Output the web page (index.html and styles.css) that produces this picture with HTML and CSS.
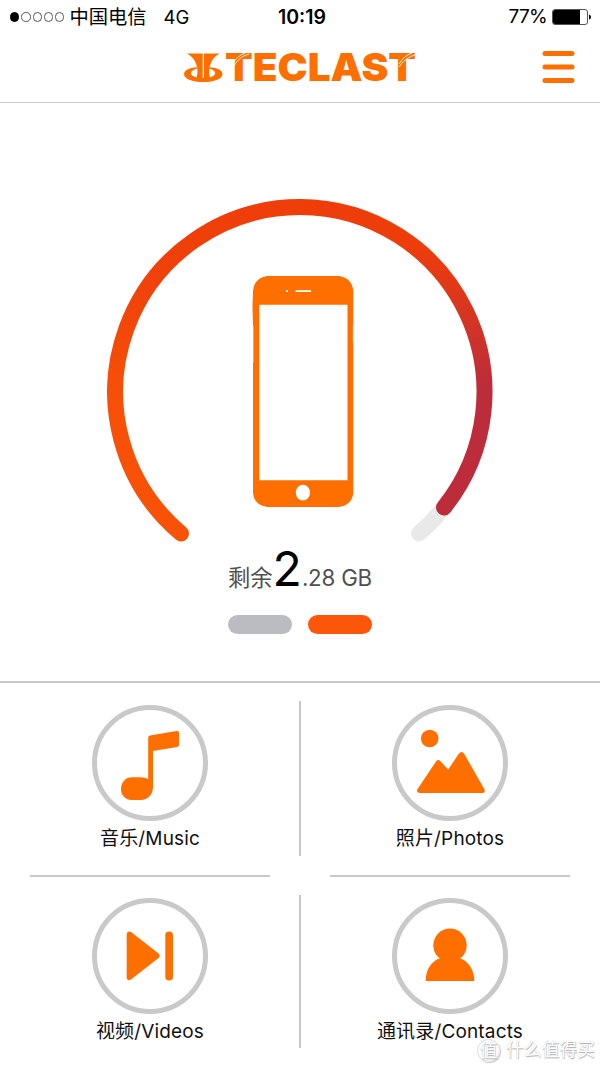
FILE: index.html
```html
<!DOCTYPE html>
<html lang="zh-CN">
<head>
<meta charset="utf-8">
<title>Teclast</title>
<link rel="stylesheet" href="styles.css">
</head>
<body>
<div class="app">
  <div class="status">
    <div class="carrier">
      <span class="dots"><i class="dot full"></i><i class="dot"></i><i class="dot"></i><i class="dot"></i><i class="dot"></i></span>
      <span class="operator">中国电信</span>
      <span class="network">4G</span>
    </div>
    <div class="clock">10:19</div>
    <div class="power">
      <span class="percent">77%</span>
      <svg width="39" height="16" viewBox="0 0 39 16">
        <rect x=".5" y=".5" width="35" height="15" rx="2.5" fill="#fff" stroke="#555"/>
        <path d="M3 1H28V15H3Q1 15 1 13V3Q1 1 3 1Z"/>
        <path d="M37 5.5Q39 6 39 8T37 10.500Z"/>
      </svg>
    </div>
  </div>

  <header class="header">
    <svg class="logo" width="234" height="34" viewBox="183 50 234 34">
      <g fill="#ff6f00">
        <path d="M187 53.500H202.700V78H196.500C199.500 68 195.500 58 187 53.500Z"/>
        <path d="M203.900 53.500H219.500C211 58 207.500 68 210 78H203.900Z"/>
        <path d="M197.300 67.200C188.500 67.800 184 70.500 184 74.200C184 78.700 192 82 203.300 82C214.500 82 222.500 78.700 222.500 74.200C222.500 70.500 218 67.800 209.200 67.200V68.500C213 69.500 215 71.200 215 73.200C215 75.500 212 77 209 77.500C206 78.300 200 78.300 197.500 77.500C194 77 191 75.500 191 73.200C191 71.200 193.500 69.500 197.300 68.500Z"/>
      </g>
      <text class="wordmark" x="225" y="81" textLength="191" lengthAdjust="spacingAndGlyphs">TECLAST</text>
      <g fill="none" stroke="#fff" stroke-width=".9">
        <path d="M233 63C236 58 240 55 245 53M234 66C237 60 242 56 249 54"/>
        <path d="M399 64C402 59 406 55 412 53M399 67C403 61 408 57 416 54.500"/>
      </g>
    </svg>
    <svg class="menu" width="34" height="34" viewBox="0 0 34 34" stroke="#ff6f00" stroke-width="5" stroke-linecap="round">
      <path d="M4 3.500H31M4 17H31M4 30.500H31"/>
    </svg>
  </header>

  <main class="storage">
    <svg class="gauge" width="386" height="346" viewBox="107 199 386 346">
      <defs>
        <linearGradient id="warm" gradientUnits="userSpaceOnUse" x1="0" y1="199" x2="0" y2="542">
          <stop offset="0" stop-color="#ee3d09"/><stop offset=".25" stop-color="#f0420a"/><stop offset=".56" stop-color="#f74f08"/><stop offset="1" stop-color="#f85208"/>
        </linearGradient>
        <linearGradient id="hot" gradientUnits="userSpaceOnUse" x1="0" y1="199" x2="0" y2="542">
          <stop offset="0" stop-color="#ee3d09"/><stop offset=".15" stop-color="#ec3d0c"/><stop offset=".55" stop-color="#bd2c3b"/><stop offset="1" stop-color="#bd2c3b"/>
        </linearGradient>
      </defs>
      <g fill="none" stroke-width="16" stroke-linecap="round">
        <path stroke="#e9e9e9" d="M444 507.500A185 185 0 0 1 419 533.500"/>
        <path stroke="url(#hot)" d="M300 207A185 185 0 0 1 444 507.500"/>
        <path stroke="url(#warm)" d="M181 533.500A185 185 0 0 1 300 207"/>
      </g>
      <path fill="#ff6f00" d="M267 276H339Q352 278 353.300 291V493Q352 505 339 507H267Q254 505 253 493V326L252.500 306L253 291Q254 278 267 276Z"/>
      <path fill="#fff" d="M259.300 304.700H347.500V480.300H259.300ZM295.500 290.300H311V292H295.500ZM286 290.300H288V292H286Z"/>
      <path stroke="#fff" stroke-width=".6" d="M253.100 326V363M353.300 325V343"/>
      <ellipse cx="302.900" cy="492.700" rx="7.100" ry="7.900" fill="#fff"/>
    </svg>
    <div class="remaining"><span class="cjk">剩余</span><span class="big">2</span><span class="rest">.28 GB</span></div>
    <div class="pager"><i class="pill"></i><i class="pill active"></i></div>
  </main>

  <nav class="grid">
    <a class="tile">
      <svg class="ring" viewBox="0 0 116 116"><circle class="rim" cx="58" cy="58" r="55.500"/>
        <path d="M56.200 32.500Q56.200 31 58 30.500L84.500 26Q87 25.600 87 28V40Q87 41.600 85 42L61 46V82C61 90 55 95 49 95H40C33 95 29 90 29 84C29 77 34 72.300 40 72.300H49Q53 72.300 56.200 74Z"/>
      </svg>
      <span class="label"><span>音乐</span>/Music</span>
    </a>
    <a class="tile">
      <svg class="ring" viewBox="0 0 116 116"><circle class="rim" cx="58" cy="58" r="55.500"/>
        <circle cx="37.700" cy="33.500" r="8.800"/>
        <path d="M25.300 84.500L44 56.500Q46 53.800 48.500 56.300L56.200 64.500L67 48.500Q69.500 45.500 72 48.500L92.500 84.500Q93.500 87.800 90.500 88H27.500Q24 87.500 25.300 84.500Z"/>
      </svg>
      <span class="label"><span>照片</span>/Photos</span>
    </a>
    <a class="tile">
      <svg class="ring" viewBox="0 0 116 116"><circle class="rim" cx="58" cy="58" r="55.500"/>
        <path d="M34.700 36Q35 32.300 39 34L66.500 55.500Q69 58 66.500 60L39 81.500Q35.500 83.500 34.700 80Z"/>
        <rect x="73.300" y="33.500" width="7.700" height="49" rx="3.800"/>
      </svg>
      <span class="label"><span>视频</span>/Videos</span>
    </a>
    <a class="tile">
      <svg class="ring" viewBox="0 0 116 116"><circle class="rim" cx="58" cy="58" r="55.500"/>
        <circle cx="58" cy="47.300" r="16.700"/>
        <path d="M33.700 83C33.700 71 39.500 63 48.500 60H67.500C76.500 63 82.300 72 82.300 83Z"/>
      </svg>
      <span class="label"><span>通讯录</span>/Contacts</span>
    </a>
  </nav>
  <div class="watermark"><span class="seal">值</span><span>什么值得买</span></div>
</div>
</body>
</html>
```
FILE: styles.css
```css
* { box-sizing: border-box; }
body { margin: 0; background: #fff; color: #000; font-family: Inter, "Noto Sans CJK SC", sans-serif; }
.app { position: relative; width: 600px; height: 1067px; overflow: hidden; display: flex; flex-direction: column; }

.status { height: 34px; padding: 0 9px 0 10px; display: grid; grid-template-columns: 1fr auto 1fr; align-items: center; font-size: 19.3px; line-height: 34px; white-space: nowrap; }
.carrier, .power, .dots { display: flex; align-items: center; }
.dots { gap: 2px; margin-right: 5px; }
.dot { width: 9.300px; height: 9.300px; border: 1px solid #555; border-radius: 50%; }
.dot.full { background: #000; border-color: #000; }
.network { margin-left: 17px; font-size: 18.500px; }
.clock { font-weight: 600; font-size: 19.5px; padding-left: 3px; }
.power { justify-content: flex-end; gap: 5px; }
.percent { font-size: 19px; letter-spacing: -.7px; }

.header { height: 69px; border-bottom: 1px solid #cfcfcf; display: grid; grid-template-columns: 1fr auto 1fr; padding: 0 25px 2px; align-items: center; }
.logo { grid-column: 2; display: block; overflow: visible; }
.wordmark { font: 900 38px Inter, sans-serif; fill: #ff6f00; }
.menu { justify-self: end; }

.storage { height: 579.500px; padding-top: 96px; display: flex; flex-direction: column; align-items: center; border-bottom: 2px solid #c8c8c8; }
.gauge { display: block; flex: none; }
.remaining { height: 54px; line-height: 48px; display: flex; align-items: baseline; white-space: nowrap; color: #505050; font-size: 22.300px; }
.rest { letter-spacing: -.2px; }
.big { color: #000; font-size: 48px; line-height: 48px; }
.pager { display: flex; gap: 16px; margin-top: 16px; }
.pill { width: 64px; height: 19px; border-radius: 10px; background: #bbbcc1; }
.pill.active { background: #fb560a; }

.grid { flex: 1; display: grid; grid-template-columns: 1fr 1fr; grid-template-rows: 193px 1fr;
  background:
    linear-gradient(#c8c8c8, #c8c8c8) 299px 18.500px / 2px 155px no-repeat,
    linear-gradient(#c8c8c8, #c8c8c8) 299px 212.500px / 2px 153px no-repeat,
    linear-gradient(#c8c8c8, #c8c8c8) 30px 192.500px / 240px 2px no-repeat,
    linear-gradient(#c8c8c8, #c8c8c8) 330px 192.500px / 240px 2px no-repeat; }
.tile { display: flex; flex-direction: column; align-items: center; padding-top: 22.500px; }
.ring { width: 116px; height: 116px; flex: none; fill: #ff6f00; }
.rim { fill: none; stroke: #c9c9c9; stroke-width: 5; }
.label { margin-top: 6px; height: 24px; line-height: 24px; font-size: 19px; white-space: nowrap; color: #111; letter-spacing: .15px; }

.watermark { position: absolute; right: 5px; top: 1038px; display: flex; align-items: center; gap: 6px; line-height: 24px; font-size: 17.800px; color: #fff; text-shadow: .5px .5px 1px #aaa, 0 0 1px #ccc; white-space: nowrap; }
.seal { width: 23px; height: 23px; line-height: 21px; text-align: center; border: 1px solid #ddd; border-radius: 50%; box-shadow: 1px 1px 1px #ccc; }
```
